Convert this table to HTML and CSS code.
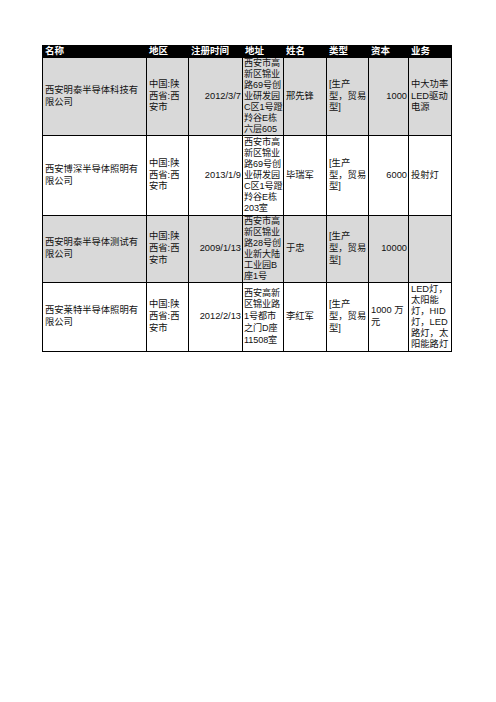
FILE: index.html
```html
<!DOCTYPE html>
<html lang="zh-CN">
<head>
<meta charset="utf-8">
<title>西安半导体企业名录</title>
<link rel="stylesheet" href="styles.css">
</head>
<body>
<div class="sheet">
  <div class="hd">名称</div>
  <div class="hd">地区</div>
  <div class="hd">注册时间</div>
  <div class="hd">地址</div>
  <div class="hd">姓名</div>
  <div class="hd">类型</div>
  <div class="hd">资本</div>
  <div class="hd">业务</div>

  <div class="c g"><span>西安明泰半导体科技有<br>限公司</span></div>
  <div class="c g"><span>中国:陕<br>西省:西<br>安市</span></div>
  <div class="c g num"><span>2012/3/7</span></div>
  <div class="c g dense addr"><span>西安市高<br>新区锦业<br>路69号创<br>业研发园<br>C区1号蹬<br>羚谷E栋<br>六层605</span></div>
  <div class="c g"><span>邢先锋</span></div>
  <div class="c g"><span>[生产<br>型，贸易<br>型]</span></div>
  <div class="c g num"><span>1000</span></div>
  <div class="c g"><span>中大功率<br>LED驱动<br>电源</span></div>

  <div class="c"><span>西安博深半导体照明有<br>限公司</span></div>
  <div class="c"><span>中国:陕<br>西省:西<br>安市</span></div>
  <div class="c num"><span>2013/1/9</span></div>
  <div class="c dense addr"><span>西安市高<br>新区锦业<br>路69号创<br>业研发园<br>C区1号蹬<br>羚谷E栋<br>203室</span></div>
  <div class="c"><span>毕瑞军</span></div>
  <div class="c"><span>[生产<br>型，贸易<br>型]</span></div>
  <div class="c num"><span>6000</span></div>
  <div class="c"><span>投射灯</span></div>

  <div class="c g"><span>西安明泰半导体测试有<br>限公司</span></div>
  <div class="c g"><span>中国:陕<br>西省:西<br>安市</span></div>
  <div class="c g num"><span>2009/1/13</span></div>
  <div class="c g dense addr"><span>西安市高<br>新区锦业<br>路28号创<br>业新大陆<br>工业园B<br>座1号</span></div>
  <div class="c g"><span>于忠</span></div>
  <div class="c g"><span>[生产<br>型，贸易<br>型]</span></div>
  <div class="c g num"><span>10000</span></div>
  <div class="c g"><span></span></div>

  <div class="c"><span>西安莱特半导体照明有<br>限公司</span></div>
  <div class="c"><span>中国:陕<br>西省:西<br>安市</span></div>
  <div class="c num"><span>2012/2/13</span></div>
  <div class="c addr"><span>西安高新<br>区锦业路<br>1号都市<br>之门D座<br>11508室</span></div>
  <div class="c"><span>李红军</span></div>
  <div class="c"><span>[生产<br>型，贸易<br>型]</span></div>
  <div class="c"><span>1000 万<br>元</span></div>
  <div class="c dense"><span>LED灯，<br>太阳能<br>灯，HID<br>灯，LED<br>路灯，太<br>阳能路灯</span></div>
</div>
</body>
</html>
```

FILE: styles.css
```css
html, body {
  margin: 0;
  padding: 0;
  background: #ffffff;
}

body {
  padding: 45px 0 0 42px;
  font-family: "Liberation Sans", "Noto Sans CJK SC", sans-serif;
  color: #111111;
}

.sheet {
  display: grid;
  grid-template-columns: 103px 41px 53px 40px 42px 41px 39px 42px;
  grid-template-rows: 12px 77px 79px 66px 68px;
  gap: 1px;
  width: max-content;
  background: #000000;
  border: 1px solid #000000;
  border-top: 0;
}

.hd {
  background: #000000;
  color: #ffffff;
  font-weight: bold;
  font-size: 9.5px;
  line-height: 12px;
  padding: 0 2px;
  white-space: nowrap;
  overflow: hidden;
}

.c {
  display: flex;
  align-items: center;
  background: #ffffff;
  padding: 0 1px 0 2px;
  overflow: hidden;
  font-size: 9.3px;
  line-height: 11.7px;
  white-space: nowrap;
}

.c.g {
  background: #d9d9d9;
}

.c.num {
  justify-content: flex-end;
}

.c.dense {
  line-height: 11px;
}

.c.addr {
  padding: 0 0 0 1px;
  font-size: 9.1px;
  letter-spacing: -0.1px;
}

.c span {
  display: block;
}
```
